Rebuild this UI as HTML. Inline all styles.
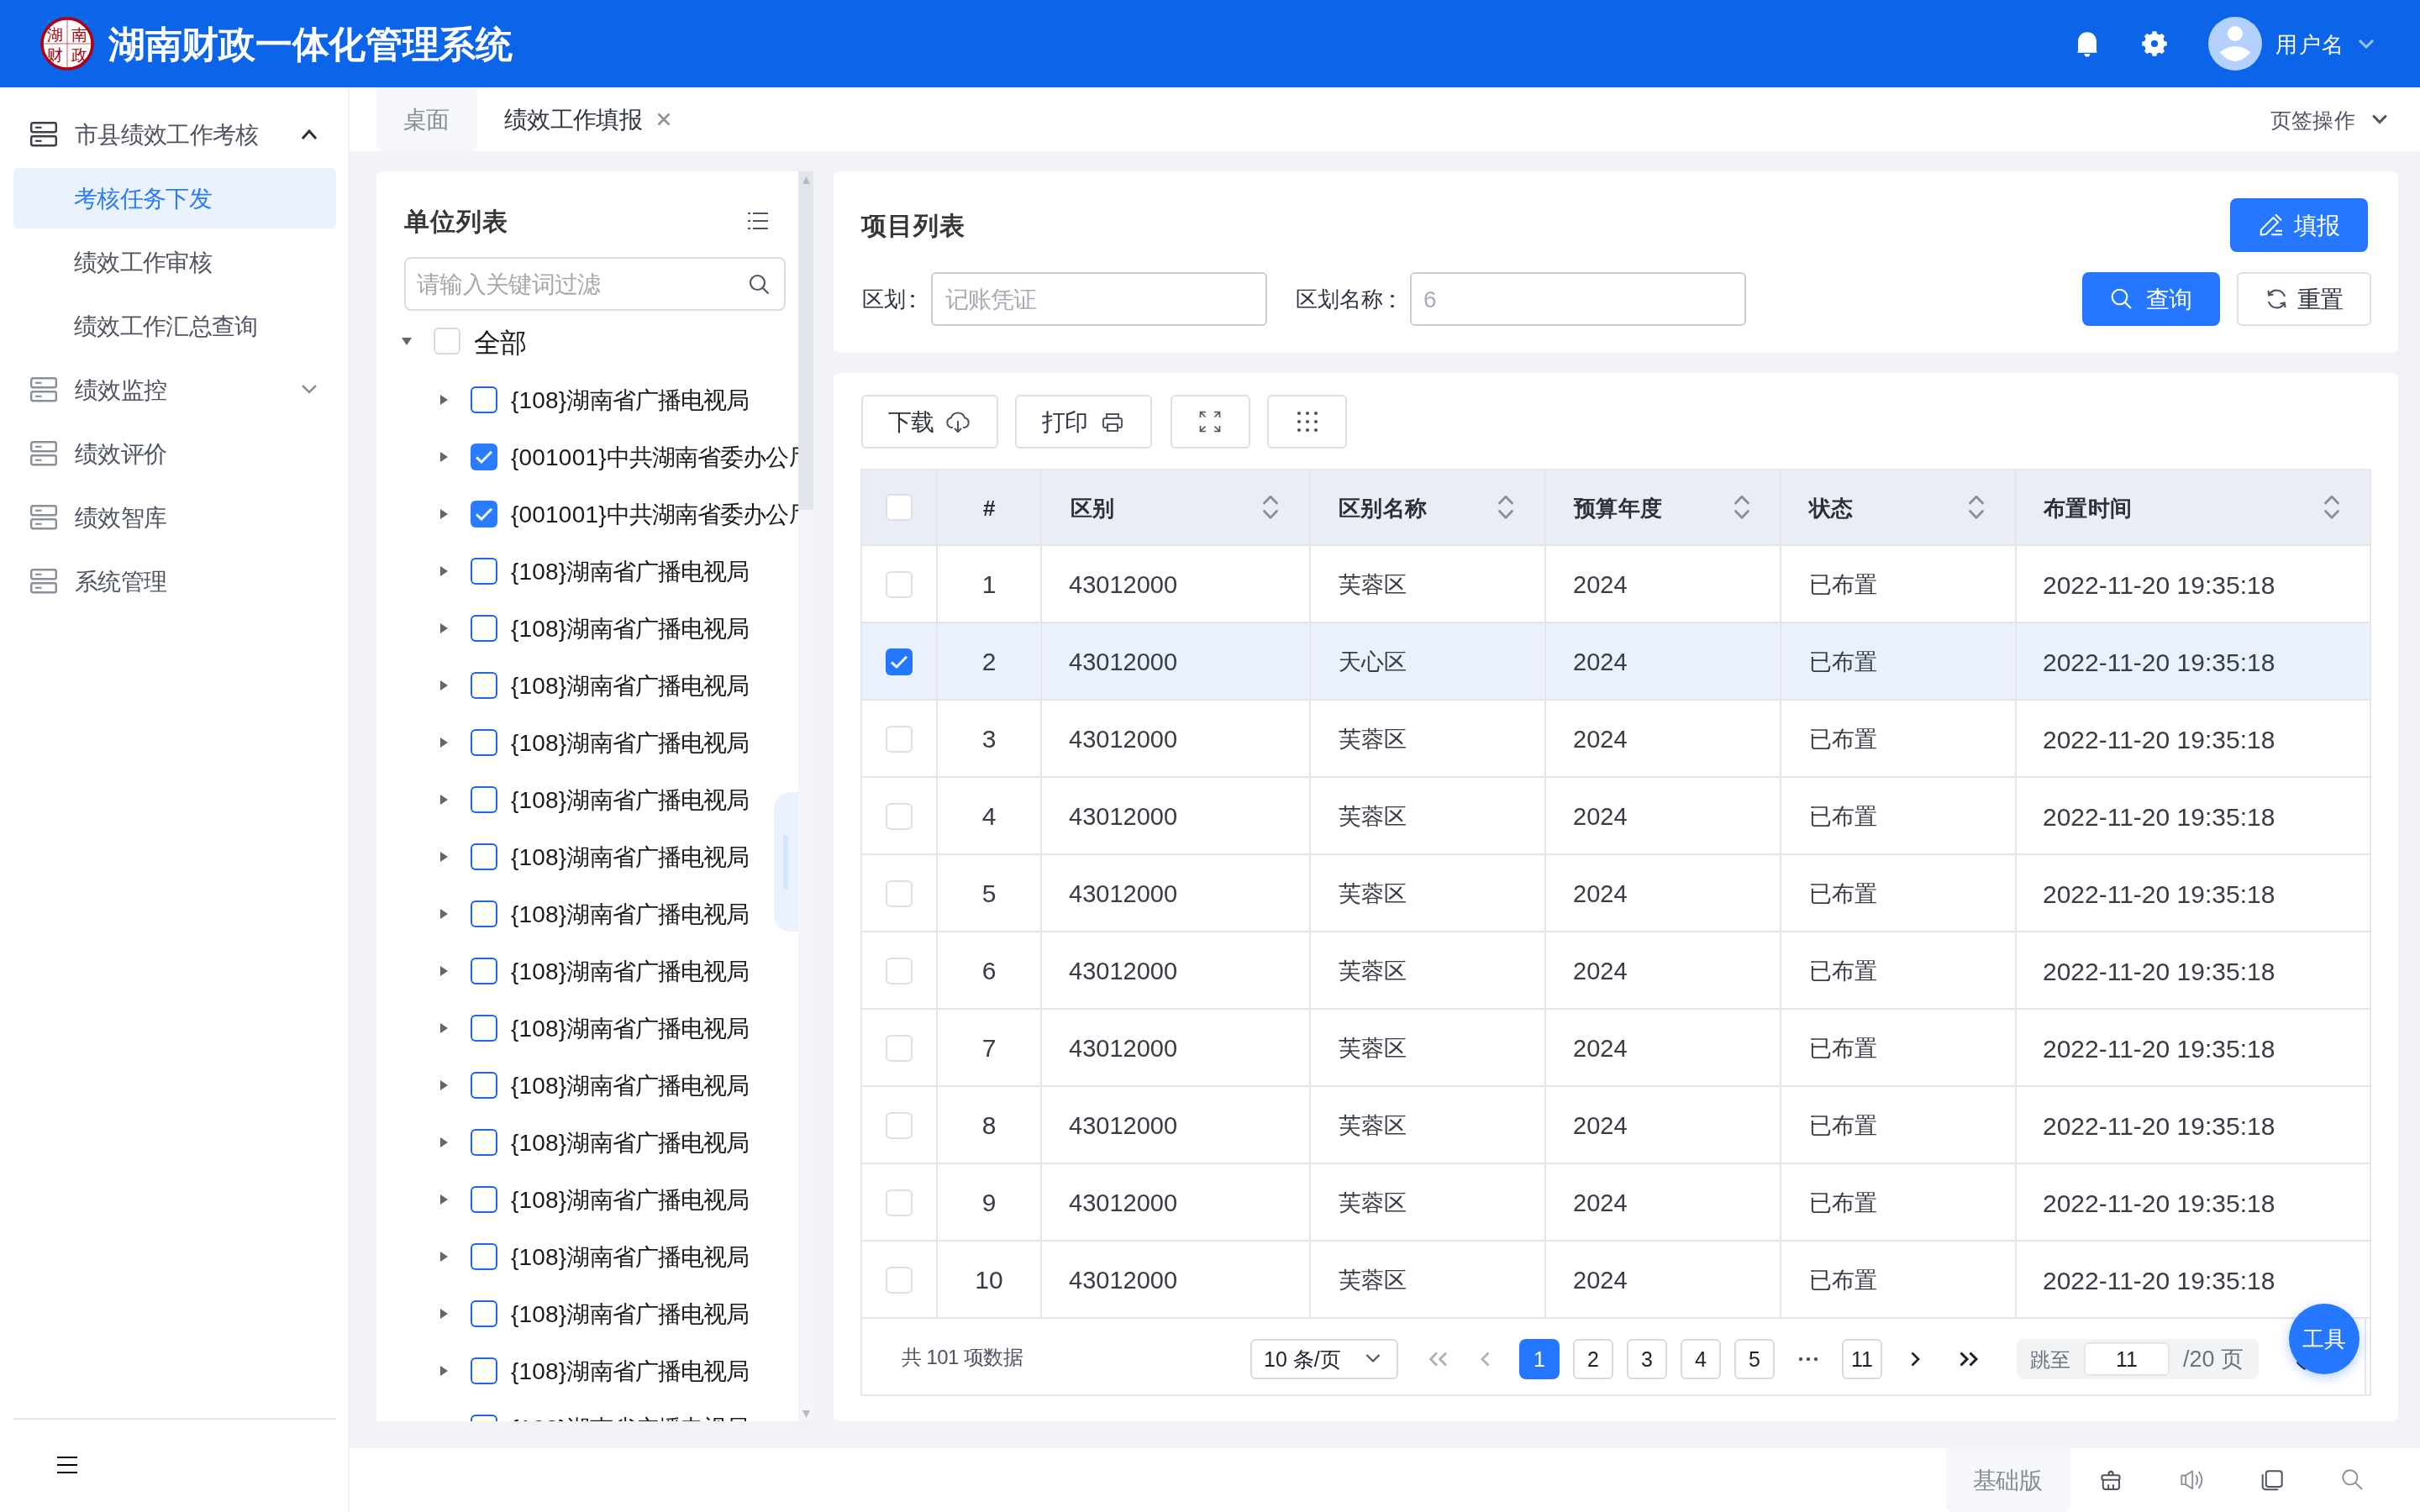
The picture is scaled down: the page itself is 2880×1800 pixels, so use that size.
<!DOCTYPE html><html><head><meta charset="utf-8"><style>
*{box-sizing:border-box;margin:0;padding:0}
html,body{width:2880px;height:1800px;overflow:hidden;background:#fff;font-family:"Liberation Sans",sans-serif;color:#1d2129}
@media (max-width:2000px){html{zoom:0.5}}
.a{position:absolute}
.t{position:absolute;white-space:nowrap;line-height:1;will-change:transform}
svg{position:absolute;overflow:visible}
.cb{position:absolute;width:32px;height:32px;border-radius:6px;background:#fff}
</style></head><body>
<div class="a" style="left:0;top:0;width:2880px;height:104px;background:#0c64e8"></div>
<svg style="left:48px;top:20px" width="64" height="64" viewBox="0 0 64 64">
<circle cx="32" cy="32" r="30" fill="#fff" stroke="#b3000f" stroke-width="3.5"/>
<line x1="32" y1="3" x2="32" y2="61" stroke="#b3000f" stroke-width="0.8" opacity="0.8"/>
<line x1="3" y1="32" x2="61" y2="32" stroke="#b3000f" stroke-width="0.8" opacity="0.8"/>
<text x="17.5" y="28" font-size="19" text-anchor="middle" fill="#a8000c" font-family="Liberation Serif" font-weight="400">湖</text>
<text x="46" y="28" font-size="19" text-anchor="middle" fill="#a8000c" font-family="Liberation Serif" font-weight="400">南</text>
<text x="17.5" y="52" font-size="19" text-anchor="middle" fill="#a8000c" font-family="Liberation Serif" font-weight="400">财</text>
<text x="46" y="52" font-size="19" text-anchor="middle" fill="#a8000c" font-family="Liberation Serif" font-weight="400">政</text>
</svg>
<div class="t" style="left:129px;top:31.3px;font-size:44px;color:#fff;font-weight:700;letter-spacing:-0.30px;">湖南财政一体化管理系统</div>
<svg style="left:2470px;top:38px" width="28" height="32" viewBox="0 0 28 32">
<path d="M3 23 L3 11.5 C3 5 7.8 0.3 14 0.3 C20.2 0.3 25 5 25 11.5 L25 23 L25.3 23 L25.3 24.8 L2.6 24.8 L2.6 23 Z" fill="#fff"/>
<path d="M10.4 25.9 L17.4 25.9 C17.2 28.2 15.8 29.6 13.9 29.6 C12 29.6 10.6 28.2 10.4 25.9 Z" fill="#fff"/>
</svg>
<svg style="left:2549px;top:37px" width="30" height="30" viewBox="0 0 30 30">
<path fill="#fff" fill-rule="evenodd" d="M12.15 3.14 L12.52 0.21 L17.48 0.21 L17.85 3.14 L21.37 4.60 L23.71 2.79 L27.21 6.29 L25.40 8.63 L26.86 12.15 L29.79 12.52 L29.79 17.48 L26.86 17.85 L25.40 21.37 L27.21 23.71 L23.71 27.21 L21.37 25.40 L17.85 26.86 L17.48 29.79 L12.52 29.79 L12.15 26.86 L8.63 25.40 L6.29 27.21 L2.79 23.71 L4.60 21.37 L3.14 17.85 L0.21 17.48 L0.21 12.52 L3.14 12.15 L4.60 8.63 L2.79 6.29 L6.29 2.79 L8.63 4.60 Z M19.1 15 A4.1 4.1 0 1 0 10.9 15 A4.1 4.1 0 1 0 19.1 15 Z"/>
</svg>
<svg style="left:2628px;top:20px" width="64" height="64" viewBox="0 0 64 64">
<circle cx="32" cy="32" r="32" fill="#b3d1fe"/>
<circle cx="32" cy="20" r="9" fill="#fff"/>
<path d="M13.8 42.2 Q32 27.6 50.2 42.2 Q32 63.8 13.8 42.2 Z" fill="#fff"/>
</svg>
<div class="t" style="left:2708px;top:39.8px;font-size:26px;color:#fff;font-weight:400;letter-spacing:1.60px;">用户名</div>
<svg style="left:2806px;top:46px" width="20" height="12" viewBox="0 0 20 12"><path d="M2 2 L10 10 L18 2" fill="none" stroke="#9fc2f7" stroke-width="3"/></svg>
<div class="a" style="left:0;top:104px;width:416px;height:1696px;background:#fff;border-right:2px solid #f2f2f3"></div>
<div class="a" style="left:16px;top:200px;width:384px;height:72px;background:#eaf2fe;border-radius:6px"></div>
<svg style="left:36px;top:145px" width="33" height="30" viewBox="0 0 33 30">
<rect x="1.2" y="1.2" width="29.6" height="11" rx="2" fill="none" stroke="#3a3f4a" stroke-width="2.4"/>
<rect x="1.2" y="17.2" width="29.6" height="11" rx="2" fill="none" stroke="#3a3f4a" stroke-width="2.4"/>
<rect x="6" y="5.7" width="7.5" height="2.2" fill="#3a3f4a"/><rect x="6" y="21.7" width="7.5" height="2.2" fill="#3a3f4a"/>
</svg>
<div class="t" style="left:89px;top:146.8px;font-size:28px;color:#4e5461;font-weight:400;letter-spacing:-0.70px;">市县绩效工作考核</div>
<svg style="left:358px;top:153px" width="20" height="14" viewBox="0 0 20 14"><path d="M2 12 L10 3 L18 12" fill="none" stroke="#2b2f36" stroke-width="3"/></svg>
<div class="t" style="left:88px;top:222.8px;font-size:28px;color:#2b7bff;font-weight:400;letter-spacing:-0.70px;">考核任务下发</div>
<div class="t" style="left:88px;top:298.8px;font-size:28px;color:#50555f;font-weight:400;letter-spacing:-0.70px;">绩效工作审核</div>
<div class="t" style="left:88px;top:374.8px;font-size:28px;color:#50555f;font-weight:400;letter-spacing:-0.70px;">绩效工作汇总查询</div>
<svg style="left:36px;top:449px" width="33" height="30" viewBox="0 0 33 30">
<rect x="1.2" y="1.2" width="29.6" height="11" rx="2" fill="none" stroke="#8a9099" stroke-width="2.4"/>
<rect x="1.2" y="17.2" width="29.6" height="11" rx="2" fill="none" stroke="#8a9099" stroke-width="2.4"/>
<rect x="6" y="5.7" width="7.5" height="2.2" fill="#8a9099"/><rect x="6" y="21.7" width="7.5" height="2.2" fill="#8a9099"/>
</svg>
<div class="t" style="left:89px;top:450.8px;font-size:28px;color:#4e5461;font-weight:400;letter-spacing:-0.70px;">绩效监控</div>
<svg style="left:36px;top:525px" width="33" height="30" viewBox="0 0 33 30">
<rect x="1.2" y="1.2" width="29.6" height="11" rx="2" fill="none" stroke="#8a9099" stroke-width="2.4"/>
<rect x="1.2" y="17.2" width="29.6" height="11" rx="2" fill="none" stroke="#8a9099" stroke-width="2.4"/>
<rect x="6" y="5.7" width="7.5" height="2.2" fill="#8a9099"/><rect x="6" y="21.7" width="7.5" height="2.2" fill="#8a9099"/>
</svg>
<div class="t" style="left:89px;top:526.8px;font-size:28px;color:#4e5461;font-weight:400;letter-spacing:-0.70px;">绩效评价</div>
<svg style="left:36px;top:601px" width="33" height="30" viewBox="0 0 33 30">
<rect x="1.2" y="1.2" width="29.6" height="11" rx="2" fill="none" stroke="#8a9099" stroke-width="2.4"/>
<rect x="1.2" y="17.2" width="29.6" height="11" rx="2" fill="none" stroke="#8a9099" stroke-width="2.4"/>
<rect x="6" y="5.7" width="7.5" height="2.2" fill="#8a9099"/><rect x="6" y="21.7" width="7.5" height="2.2" fill="#8a9099"/>
</svg>
<div class="t" style="left:89px;top:602.8px;font-size:28px;color:#4e5461;font-weight:400;letter-spacing:-0.70px;">绩效智库</div>
<svg style="left:36px;top:677px" width="33" height="30" viewBox="0 0 33 30">
<rect x="1.2" y="1.2" width="29.6" height="11" rx="2" fill="none" stroke="#8a9099" stroke-width="2.4"/>
<rect x="1.2" y="17.2" width="29.6" height="11" rx="2" fill="none" stroke="#8a9099" stroke-width="2.4"/>
<rect x="6" y="5.7" width="7.5" height="2.2" fill="#8a9099"/><rect x="6" y="21.7" width="7.5" height="2.2" fill="#8a9099"/>
</svg>
<div class="t" style="left:89px;top:678.8px;font-size:28px;color:#4e5461;font-weight:400;letter-spacing:-0.70px;">系统管理</div>
<svg style="left:358px;top:456px" width="20" height="14" viewBox="0 0 20 14"><path d="M2 3 L10 11 L18 3" fill="none" stroke="#8a9099" stroke-width="2.5"/></svg>
<div class="a" style="left:16px;top:1688px;width:384px;height:2px;background:#e6e6e8"></div>
<div class="a" style="left:68px;top:1734px;width:24px;height:2px;background:#000"></div>
<div class="a" style="left:68px;top:1743px;width:24px;height:2px;background:#000"></div>
<div class="a" style="left:68px;top:1752px;width:24px;height:2px;background:#000"></div>
<div class="a" style="left:448px;top:104px;width:120px;height:76px;background:#f5f7fa;border-radius:0 0 8px 8px"></div>
<div class="t" style="left:480px;top:128.8px;font-size:28px;color:#878d96;font-weight:400;letter-spacing:-0.70px;">桌面</div>
<div class="t" style="left:600px;top:128.8px;font-size:28px;color:#2f3540;font-weight:400;letter-spacing:-0.70px;">绩效工作填报</div>
<svg style="left:782px;top:134px" width="16" height="16" viewBox="0 0 16 16"><path d="M1.5 1.5 L14.5 14.5 M14.5 1.5 L1.5 14.5" stroke="#8b9099" stroke-width="2.5"/></svg>
<div class="t" style="left:2702px;top:130.8px;font-size:25px;color:#4e5461;font-weight:400;letter-spacing:0.20px;">页签操作</div>
<svg style="left:2822px;top:135px" width="20" height="14" viewBox="0 0 20 14"><path d="M2.2 2.5 L10 10.5 L17.8 2.5" fill="none" stroke="#4e5461" stroke-width="3"/></svg>
<div class="a" style="left:416px;top:180px;width:2464px;height:1544px;background:#f0f2f5"></div>
<div class="a" style="left:448px;top:204px;width:520px;height:1488px;background:#fff;border-radius:8px 0 0 0;overflow:hidden">
<div class="t" style="left:33px;top:44.9px;font-size:30px;color:#363636;font-weight:700;letter-spacing:1.00px;">单位列表</div>
<svg style="left:442px;top:48px" width="24" height="21" viewBox="0 0 24 21">
<g fill="#4e5461"><rect x="0" y="1" width="3" height="2"/><rect x="6" y="1" width="18" height="2"/>
<rect x="0" y="10" width="3" height="2"/><rect x="6" y="10" width="18" height="2"/>
<rect x="0" y="19" width="3" height="2"/><rect x="6" y="19" width="18" height="2"/></g></svg>
<div class="a" style="left:33px;top:102px;width:454px;height:64px;border:2px solid #dcdcdc;border-radius:8px"></div>
<div class="t" style="left:48px;top:120.8px;font-size:28px;color:#a8a8a8;font-weight:400;letter-spacing:-0.70px;">请输入关键词过滤</div>
<svg style="left:443px;top:122px" width="25" height="25" viewBox="0 0 25 25">
<circle cx="10.5" cy="10.5" r="8.5" fill="none" stroke="#4e5461" stroke-width="2.2"/>
<path d="M17 17 L23.5 23.5" stroke="#4e5461" stroke-width="2.2"/></svg>
<svg style="left:30px;top:198px" width="12" height="9" viewBox="0 0 12 9"><path d="M0 0 L12 0 L6 9 Z" fill="#666"/></svg>
<div class="cb" style="left:68px;top:186px;border:2px solid #d9d9d9"></div>
<div class="t" style="left:116px;top:188.0px;font-size:32px;color:#1a1a1a;font-weight:400;letter-spacing:-0.80px;">全部</div>
<svg style="left:76px;top:266px" width="9" height="12" viewBox="0 0 9 12"><path d="M0 0 L9 6 L0 12 Z" fill="#666"/></svg>
<div class="cb" style="left:112px;top:256px;border:2.5px solid #1a66f0"></div>
<div class="t" style="left:160px;top:258.8px;font-size:28px;color:#1a1a1a;font-weight:400;letter-spacing:-0.90px;"><span style="letter-spacing:0.2px">{108}</span>湖南省广播电视局</div>
<svg style="left:76px;top:334px" width="9" height="12" viewBox="0 0 9 12"><path d="M0 0 L9 6 L0 12 Z" fill="#666"/></svg>
<div class="cb" style="left:112px;top:324px;background:#2b7bff"></div>
<svg style="left:112px;top:324px" width="32" height="32" viewBox="0 0 32 32"><path d="M7 16.3 L13 22 L25 9.8" fill="none" stroke="#f2f6ff" stroke-width="3"/></svg>
<div class="t" style="left:160px;top:326.8px;font-size:28px;color:#1a1a1a;font-weight:400;letter-spacing:-0.90px;"><span style="letter-spacing:0.2px">{001001}</span>中共湖南省委办公厅</div>
<svg style="left:76px;top:402px" width="9" height="12" viewBox="0 0 9 12"><path d="M0 0 L9 6 L0 12 Z" fill="#666"/></svg>
<div class="cb" style="left:112px;top:392px;background:#2b7bff"></div>
<svg style="left:112px;top:392px" width="32" height="32" viewBox="0 0 32 32"><path d="M7 16.3 L13 22 L25 9.8" fill="none" stroke="#f2f6ff" stroke-width="3"/></svg>
<div class="t" style="left:160px;top:394.8px;font-size:28px;color:#1a1a1a;font-weight:400;letter-spacing:-0.90px;"><span style="letter-spacing:0.2px">{001001}</span>中共湖南省委办公厅</div>
<svg style="left:76px;top:470px" width="9" height="12" viewBox="0 0 9 12"><path d="M0 0 L9 6 L0 12 Z" fill="#666"/></svg>
<div class="cb" style="left:112px;top:460px;border:2.5px solid #1a66f0"></div>
<div class="t" style="left:160px;top:462.8px;font-size:28px;color:#1a1a1a;font-weight:400;letter-spacing:-0.90px;"><span style="letter-spacing:0.2px">{108}</span>湖南省广播电视局</div>
<svg style="left:76px;top:538px" width="9" height="12" viewBox="0 0 9 12"><path d="M0 0 L9 6 L0 12 Z" fill="#666"/></svg>
<div class="cb" style="left:112px;top:528px;border:2.5px solid #1a66f0"></div>
<div class="t" style="left:160px;top:530.8px;font-size:28px;color:#1a1a1a;font-weight:400;letter-spacing:-0.90px;"><span style="letter-spacing:0.2px">{108}</span>湖南省广播电视局</div>
<svg style="left:76px;top:606px" width="9" height="12" viewBox="0 0 9 12"><path d="M0 0 L9 6 L0 12 Z" fill="#666"/></svg>
<div class="cb" style="left:112px;top:596px;border:2.5px solid #1a66f0"></div>
<div class="t" style="left:160px;top:598.8px;font-size:28px;color:#1a1a1a;font-weight:400;letter-spacing:-0.90px;"><span style="letter-spacing:0.2px">{108}</span>湖南省广播电视局</div>
<svg style="left:76px;top:674px" width="9" height="12" viewBox="0 0 9 12"><path d="M0 0 L9 6 L0 12 Z" fill="#666"/></svg>
<div class="cb" style="left:112px;top:664px;border:2.5px solid #1a66f0"></div>
<div class="t" style="left:160px;top:666.8px;font-size:28px;color:#1a1a1a;font-weight:400;letter-spacing:-0.90px;"><span style="letter-spacing:0.2px">{108}</span>湖南省广播电视局</div>
<svg style="left:76px;top:742px" width="9" height="12" viewBox="0 0 9 12"><path d="M0 0 L9 6 L0 12 Z" fill="#666"/></svg>
<div class="cb" style="left:112px;top:732px;border:2.5px solid #1a66f0"></div>
<div class="t" style="left:160px;top:734.8px;font-size:28px;color:#1a1a1a;font-weight:400;letter-spacing:-0.90px;"><span style="letter-spacing:0.2px">{108}</span>湖南省广播电视局</div>
<svg style="left:76px;top:810px" width="9" height="12" viewBox="0 0 9 12"><path d="M0 0 L9 6 L0 12 Z" fill="#666"/></svg>
<div class="cb" style="left:112px;top:800px;border:2.5px solid #1a66f0"></div>
<div class="t" style="left:160px;top:802.8px;font-size:28px;color:#1a1a1a;font-weight:400;letter-spacing:-0.90px;"><span style="letter-spacing:0.2px">{108}</span>湖南省广播电视局</div>
<svg style="left:76px;top:878px" width="9" height="12" viewBox="0 0 9 12"><path d="M0 0 L9 6 L0 12 Z" fill="#666"/></svg>
<div class="cb" style="left:112px;top:868px;border:2.5px solid #1a66f0"></div>
<div class="t" style="left:160px;top:870.8px;font-size:28px;color:#1a1a1a;font-weight:400;letter-spacing:-0.90px;"><span style="letter-spacing:0.2px">{108}</span>湖南省广播电视局</div>
<svg style="left:76px;top:946px" width="9" height="12" viewBox="0 0 9 12"><path d="M0 0 L9 6 L0 12 Z" fill="#666"/></svg>
<div class="cb" style="left:112px;top:936px;border:2.5px solid #1a66f0"></div>
<div class="t" style="left:160px;top:938.8px;font-size:28px;color:#1a1a1a;font-weight:400;letter-spacing:-0.90px;"><span style="letter-spacing:0.2px">{108}</span>湖南省广播电视局</div>
<svg style="left:76px;top:1014px" width="9" height="12" viewBox="0 0 9 12"><path d="M0 0 L9 6 L0 12 Z" fill="#666"/></svg>
<div class="cb" style="left:112px;top:1004px;border:2.5px solid #1a66f0"></div>
<div class="t" style="left:160px;top:1006.8px;font-size:28px;color:#1a1a1a;font-weight:400;letter-spacing:-0.90px;"><span style="letter-spacing:0.2px">{108}</span>湖南省广播电视局</div>
<svg style="left:76px;top:1082px" width="9" height="12" viewBox="0 0 9 12"><path d="M0 0 L9 6 L0 12 Z" fill="#666"/></svg>
<div class="cb" style="left:112px;top:1072px;border:2.5px solid #1a66f0"></div>
<div class="t" style="left:160px;top:1074.8px;font-size:28px;color:#1a1a1a;font-weight:400;letter-spacing:-0.90px;"><span style="letter-spacing:0.2px">{108}</span>湖南省广播电视局</div>
<svg style="left:76px;top:1150px" width="9" height="12" viewBox="0 0 9 12"><path d="M0 0 L9 6 L0 12 Z" fill="#666"/></svg>
<div class="cb" style="left:112px;top:1140px;border:2.5px solid #1a66f0"></div>
<div class="t" style="left:160px;top:1142.8px;font-size:28px;color:#1a1a1a;font-weight:400;letter-spacing:-0.90px;"><span style="letter-spacing:0.2px">{108}</span>湖南省广播电视局</div>
<svg style="left:76px;top:1218px" width="9" height="12" viewBox="0 0 9 12"><path d="M0 0 L9 6 L0 12 Z" fill="#666"/></svg>
<div class="cb" style="left:112px;top:1208px;border:2.5px solid #1a66f0"></div>
<div class="t" style="left:160px;top:1210.8px;font-size:28px;color:#1a1a1a;font-weight:400;letter-spacing:-0.90px;"><span style="letter-spacing:0.2px">{108}</span>湖南省广播电视局</div>
<svg style="left:76px;top:1286px" width="9" height="12" viewBox="0 0 9 12"><path d="M0 0 L9 6 L0 12 Z" fill="#666"/></svg>
<div class="cb" style="left:112px;top:1276px;border:2.5px solid #1a66f0"></div>
<div class="t" style="left:160px;top:1278.8px;font-size:28px;color:#1a1a1a;font-weight:400;letter-spacing:-0.90px;"><span style="letter-spacing:0.2px">{108}</span>湖南省广播电视局</div>
<svg style="left:76px;top:1354px" width="9" height="12" viewBox="0 0 9 12"><path d="M0 0 L9 6 L0 12 Z" fill="#666"/></svg>
<div class="cb" style="left:112px;top:1344px;border:2.5px solid #1a66f0"></div>
<div class="t" style="left:160px;top:1346.8px;font-size:28px;color:#1a1a1a;font-weight:400;letter-spacing:-0.90px;"><span style="letter-spacing:0.2px">{108}</span>湖南省广播电视局</div>
<svg style="left:76px;top:1422px" width="9" height="12" viewBox="0 0 9 12"><path d="M0 0 L9 6 L0 12 Z" fill="#666"/></svg>
<div class="cb" style="left:112px;top:1412px;border:2.5px solid #1a66f0"></div>
<div class="t" style="left:160px;top:1414.8px;font-size:28px;color:#1a1a1a;font-weight:400;letter-spacing:-0.90px;"><span style="letter-spacing:0.2px">{108}</span>湖南省广播电视局</div>
<svg style="left:76px;top:1490px" width="9" height="12" viewBox="0 0 9 12"><path d="M0 0 L9 6 L0 12 Z" fill="#666"/></svg>
<div class="cb" style="left:112px;top:1480px;border:2.5px solid #1a66f0"></div>
<div class="t" style="left:160px;top:1482.8px;font-size:28px;color:#1a1a1a;font-weight:400;letter-spacing:-0.90px;"><span style="letter-spacing:0.2px">{108}</span>湖南省广播电视局</div>
<div class="a" style="left:473px;top:739px;width:40px;height:166px;background:#ebf2fe;border-radius:20px 0 0 20px"></div>
<div class="a" style="left:484px;top:790px;width:6px;height:65px;background:#d6e6fd;border-radius:3px"></div>
<div class="a" style="left:502px;top:0;width:18px;height:1488px;background:#f4f5f8"></div>
<div class="a" style="left:502px;top:0;width:18px;height:403px;background:#e2e5eb"></div>
<svg style="left:507px;top:6px" width="9" height="9" viewBox="0 0 9 9"><path d="M4.5 0 L9 9 L0 9 Z" fill="#b4bac5"/></svg>
<svg style="left:507px;top:1475px" width="9" height="9" viewBox="0 0 9 9"><path d="M0 0 L9 0 L4.5 9 Z" fill="#b4bac5"/></svg>
</div>
<div class="a" style="left:992px;top:204px;width:1862px;height:216px;background:#fff;border-radius:8px"></div>
<div class="t" style="left:1025px;top:254.4px;font-size:30px;color:#363636;font-weight:700;letter-spacing:1.00px;">项目列表</div>
<div class="t" style="left:1026px;top:343.1px;font-size:26px;color:#2f3540;font-weight:400;letter-spacing:0.00px;">区划</div>
<div class="a" style="left:1084.2px;top:350.7px;width:3.8px;height:3.8px;border-radius:50%;background:#2f3540"></div><div class="a" style="left:1084.2px;top:362.5px;width:3.8px;height:3.8px;border-radius:50%;background:#2f3540"></div>
<div class="a" style="left:1108px;top:324px;width:400px;height:64px;border:2px solid #c9cdd4;border-radius:6px"></div>
<div class="t" style="left:1125px;top:342.8px;font-size:28px;color:#a8abb2;font-weight:400;letter-spacing:-1.00px;">记账凭证</div>
<div class="t" style="left:1542px;top:343.1px;font-size:26px;color:#2f3540;font-weight:400;letter-spacing:0.00px;">区划名称</div>
<div class="a" style="left:1655.2px;top:350.7px;width:3.8px;height:3.8px;border-radius:50%;background:#2f3540"></div><div class="a" style="left:1655.2px;top:362.5px;width:3.8px;height:3.8px;border-radius:50%;background:#2f3540"></div>
<div class="a" style="left:1678px;top:324px;width:400px;height:64px;border:2px solid #c9cdd4;border-radius:6px"></div>
<div class="t" style="left:1694px;top:342.8px;font-size:28px;color:#a8abb2;font-weight:400;letter-spacing:0.00px;">6</div>
<div class="a" style="left:2654px;top:236px;width:164px;height:64px;background:#2677ff;border-radius:8px"></div>
<svg style="left:2688px;top:253px" width="30" height="28" viewBox="0 0 30 28">
<path d="M2.5 26.5 L3 20.5 L17.5 6 L23 11.5 L8.5 26 Z" fill="none" stroke="#fff" stroke-width="2" stroke-linejoin="round"/>
<path d="M20 2.2 L27 9.2" stroke="#fff" stroke-width="2"/>
<path d="M20 21.8 L28 21.8 M15 26.3 L28 26.3" stroke="#fff" stroke-width="2"/></svg>
<div class="t" style="left:2730px;top:254.8px;font-size:28px;color:#fff;font-weight:400;letter-spacing:-0.70px;">填报</div>
<div class="a" style="left:2478px;top:324px;width:164px;height:64px;background:#2677ff;border-radius:8px"></div>
<svg style="left:2512px;top:343px" width="26" height="26" viewBox="0 0 26 26">
<circle cx="10.5" cy="10.5" r="8.8" fill="none" stroke="#fff" stroke-width="2.1"/>
<path d="M17 17 L24 24" stroke="#fff" stroke-width="2.1"/></svg>
<div class="t" style="left:2554px;top:342.8px;font-size:28px;color:#fff;font-weight:400;letter-spacing:-0.70px;">查询</div>
<div class="a" style="left:2662px;top:324px;width:160px;height:64px;background:#fff;border:2px solid #dcdfe6;border-radius:6px"></div>
<svg style="left:2696px;top:343px" width="27" height="26" viewBox="0 0 27 26">
<path d="M23 10 A10 10 0 0 0 4.5 8" fill="none" stroke="#4e5461" stroke-width="2.1"/>
<path d="M4 16 A10 10 0 0 0 22.5 18" fill="none" stroke="#4e5461" stroke-width="2.1"/>
<path d="M3.5 3 L4.2 8.5 L9.5 7.5" fill="none" stroke="#4e5461" stroke-width="2.1"/>
<path d="M23.5 23 L22.8 17.5 L17.5 18.5" fill="none" stroke="#4e5461" stroke-width="2.1"/></svg>
<div class="t" style="left:2734px;top:342.8px;font-size:28px;color:#2f3540;font-weight:400;letter-spacing:-0.70px;">重置</div>
<div class="a" style="left:992px;top:444px;width:1862px;height:1248px;background:#fff;border-radius:8px"></div>
<div class="a" style="left:1025px;top:470px;width:163px;height:64px;background:#fff;border:2px solid #dcdfe6;border-radius:6px"></div>
<div class="a" style="left:1208px;top:470px;width:163px;height:64px;background:#fff;border:2px solid #dcdfe6;border-radius:6px"></div>
<div class="a" style="left:1393px;top:470px;width:95px;height:64px;background:#fff;border:2px solid #dcdfe6;border-radius:6px"></div>
<div class="a" style="left:1508px;top:470px;width:95px;height:64px;background:#fff;border:2px solid #dcdfe6;border-radius:6px"></div>
<div class="t" style="left:1057px;top:488.8px;font-size:28px;color:#2f3540;font-weight:400;letter-spacing:-0.70px;">下载</div>
<svg style="left:1125px;top:489.5px" width="30" height="26" viewBox="0 0 30 26">
<path d="M9 19 L7.5 19 A6 6 0 0 1 7 7.2 A8.5 8.5 0 0 1 23 7.2 A6 6 0 0 1 22.5 19 L21 19" fill="none" stroke="#4e5461" stroke-width="2"/>
<path d="M15 11 L15 24 M11 20 L15 24 L19 20" fill="none" stroke="#4e5461" stroke-width="2"/></svg>
<div class="t" style="left:1240px;top:488.8px;font-size:28px;color:#2f3540;font-weight:400;letter-spacing:-0.70px;">打印</div>
<svg style="left:1311px;top:491px" width="26" height="24" viewBox="0 0 26 24">
<path d="M6 7 L6 2 L20 2 L20 7" fill="none" stroke="#4e5461" stroke-width="2"/>
<rect x="2" y="7" width="22" height="11" rx="2" fill="none" stroke="#4e5461" stroke-width="2"/>
<rect x="7" y="14" width="12" height="8" fill="#fff" stroke="#4e5461" stroke-width="2"/></svg>
<svg style="left:1427px;top:489px" width="26" height="26" viewBox="0 0 26 26">
<g fill="none" stroke="#4e5461" stroke-width="1.7">
<path d="M1.5 8 L1.5 1.5 L8 1.5 M1.5 1.5 L7.5 7.5"/><path d="M18 1.5 L24.5 1.5 L24.5 8 M24.5 1.5 L18.5 7.5"/>
<path d="M1.5 18 L1.5 24.5 L8 24.5 M1.5 24.5 L7.5 18.5"/><path d="M18 24.5 L24.5 24.5 L24.5 18 M24.5 24.5 L18.5 18.5"/></g></svg>
<svg style="left:1543px;top:489px" width="26" height="26" viewBox="0 0 26 26"><circle cx="3" cy="3" r="2.1" fill="#4e5461"/><circle cx="3" cy="13" r="2.1" fill="#4e5461"/><circle cx="3" cy="23" r="2.1" fill="#4e5461"/><circle cx="13" cy="3" r="2.1" fill="#4e5461"/><circle cx="13" cy="13" r="2.1" fill="#4e5461"/><circle cx="13" cy="23" r="2.1" fill="#4e5461"/><circle cx="23" cy="3" r="2.1" fill="#4e5461"/><circle cx="23" cy="13" r="2.1" fill="#4e5461"/><circle cx="23" cy="23" r="2.1" fill="#4e5461"/></svg>
<div class="a" style="left:1024px;top:558px;width:1798px;height:1104px;border:2px solid #e4e7ed"></div>
<div class="a" style="left:1026px;top:560px;width:1794px;height:88px;background:#e9edf5"></div>
<div class="a" style="left:1026px;top:742px;width:1794px;height:90px;background:#eaf1fd"></div>
<div class="a" style="left:1024px;top:648px;width:1798px;height:2px;background:#e5e5e5"></div>
<div class="a" style="left:1024px;top:740px;width:1798px;height:2px;background:#e5e5e5"></div>
<div class="a" style="left:1024px;top:832px;width:1798px;height:2px;background:#e5e5e5"></div>
<div class="a" style="left:1024px;top:924px;width:1798px;height:2px;background:#e5e5e5"></div>
<div class="a" style="left:1024px;top:1016px;width:1798px;height:2px;background:#e5e5e5"></div>
<div class="a" style="left:1024px;top:1108px;width:1798px;height:2px;background:#e5e5e5"></div>
<div class="a" style="left:1024px;top:1200px;width:1798px;height:2px;background:#e5e5e5"></div>
<div class="a" style="left:1024px;top:1292px;width:1798px;height:2px;background:#e5e5e5"></div>
<div class="a" style="left:1024px;top:1384px;width:1798px;height:2px;background:#e5e5e5"></div>
<div class="a" style="left:1024px;top:1476px;width:1798px;height:2px;background:#e5e5e5"></div>
<div class="a" style="left:1024px;top:1568px;width:1798px;height:2px;background:#e5e5e5"></div>
<div class="a" style="left:1114px;top:558px;width:2px;height:1012px;background:#e5e5e5"></div>
<div class="a" style="left:1238px;top:558px;width:2px;height:1012px;background:#e5e5e5"></div>
<div class="a" style="left:1558px;top:558px;width:2px;height:1012px;background:#e5e5e5"></div>
<div class="a" style="left:1838px;top:558px;width:2px;height:1012px;background:#e5e5e5"></div>
<div class="a" style="left:2118px;top:558px;width:2px;height:1012px;background:#e5e5e5"></div>
<div class="a" style="left:2398px;top:558px;width:2px;height:1012px;background:#e5e5e5"></div>
<div class="cb" style="left:1054px;top:588px;border:2px solid #dcdfe6"></div>
<div class="t" style="left:1170px;top:591.8px;font-size:26px;color:#2b2f36;font-weight:700;letter-spacing:-0.65px;">#</div>
<div class="t" style="left:1274px;top:591.8px;font-size:26px;color:#2b2f36;font-weight:700;letter-spacing:0.30px;">区别</div>
<svg style="left:1502px;top:590px" width="19" height="28" viewBox="0 0 19 28"><path d="M2.5 9 L10 1.2 L17.5 9 M2.5 18.5 L10 26.3 L17.5 18.5" fill="none" stroke="#8a8e96" stroke-width="2.8" stroke-linecap="round" stroke-linejoin="round"/></svg>
<div class="t" style="left:1593px;top:591.8px;font-size:26px;color:#2b2f36;font-weight:700;letter-spacing:0.30px;">区别名称</div>
<svg style="left:1782px;top:590px" width="19" height="28" viewBox="0 0 19 28"><path d="M2.5 9 L10 1.2 L17.5 9 M2.5 18.5 L10 26.3 L17.5 18.5" fill="none" stroke="#8a8e96" stroke-width="2.8" stroke-linecap="round" stroke-linejoin="round"/></svg>
<div class="t" style="left:1873px;top:591.8px;font-size:26px;color:#2b2f36;font-weight:700;letter-spacing:0.30px;">预算年度</div>
<svg style="left:2063px;top:590px" width="19" height="28" viewBox="0 0 19 28"><path d="M2.5 9 L10 1.2 L17.5 9 M2.5 18.5 L10 26.3 L17.5 18.5" fill="none" stroke="#8a8e96" stroke-width="2.8" stroke-linecap="round" stroke-linejoin="round"/></svg>
<div class="t" style="left:2153px;top:591.8px;font-size:26px;color:#2b2f36;font-weight:700;letter-spacing:0.30px;">状态</div>
<svg style="left:2342px;top:590px" width="19" height="28" viewBox="0 0 19 28"><path d="M2.5 9 L10 1.2 L17.5 9 M2.5 18.5 L10 26.3 L17.5 18.5" fill="none" stroke="#8a8e96" stroke-width="2.8" stroke-linecap="round" stroke-linejoin="round"/></svg>
<div class="t" style="left:2432px;top:591.8px;font-size:26px;color:#2b2f36;font-weight:700;letter-spacing:0.30px;">布置时间</div>
<svg style="left:2765px;top:590px" width="19" height="28" viewBox="0 0 19 28"><path d="M2.5 9 L10 1.2 L17.5 9 M2.5 18.5 L10 26.3 L17.5 18.5" fill="none" stroke="#8a8e96" stroke-width="2.8" stroke-linecap="round" stroke-linejoin="round"/></svg>
<div class="cb" style="left:1054px;top:680px;border:2px solid #dcdfe6"></div>
<div class="t" style="left:1116px;width:122px;text-align:center;top:681.0px;font-size:30px;color:#383c44">1</div>
<div class="t" style="left:1272px;top:682.4px;font-size:29px;color:#383c44;font-weight:400;letter-spacing:0.00px;">43012000</div>
<div class="t" style="left:1593px;top:682.8px;font-size:27px;color:#383c44;font-weight:400;letter-spacing:0.00px;">芙蓉区</div>
<div class="t" style="left:1872px;top:682.4px;font-size:29px;color:#383c44;font-weight:400;letter-spacing:0.00px;">2024</div>
<div class="t" style="left:2153px;top:682.8px;font-size:27px;color:#383c44;font-weight:400;letter-spacing:0.00px;">已布置</div>
<div class="t" style="left:2431px;top:681.9px;font-size:30px;color:#383c44;font-weight:400;letter-spacing:0.00px;">2022-11-20 19:35:18</div>
<div class="cb" style="left:1054px;top:772px;background:#2478ff"></div>
<svg style="left:1054px;top:772px" width="32" height="32" viewBox="0 0 32 32"><path d="M7 16.3 L13 22 L25 9.8" fill="none" stroke="#f2f6ff" stroke-width="3"/></svg>
<div class="t" style="left:1116px;width:122px;text-align:center;top:773.0px;font-size:30px;color:#383c44">2</div>
<div class="t" style="left:1272px;top:774.4px;font-size:29px;color:#383c44;font-weight:400;letter-spacing:0.00px;">43012000</div>
<div class="t" style="left:1593px;top:774.8px;font-size:27px;color:#383c44;font-weight:400;letter-spacing:0.00px;">天心区</div>
<div class="t" style="left:1872px;top:774.4px;font-size:29px;color:#383c44;font-weight:400;letter-spacing:0.00px;">2024</div>
<div class="t" style="left:2153px;top:774.8px;font-size:27px;color:#383c44;font-weight:400;letter-spacing:0.00px;">已布置</div>
<div class="t" style="left:2431px;top:773.9px;font-size:30px;color:#383c44;font-weight:400;letter-spacing:0.00px;">2022-11-20 19:35:18</div>
<div class="cb" style="left:1054px;top:864px;border:2px solid #dcdfe6"></div>
<div class="t" style="left:1116px;width:122px;text-align:center;top:865.0px;font-size:30px;color:#383c44">3</div>
<div class="t" style="left:1272px;top:866.4px;font-size:29px;color:#383c44;font-weight:400;letter-spacing:0.00px;">43012000</div>
<div class="t" style="left:1593px;top:866.8px;font-size:27px;color:#383c44;font-weight:400;letter-spacing:0.00px;">芙蓉区</div>
<div class="t" style="left:1872px;top:866.4px;font-size:29px;color:#383c44;font-weight:400;letter-spacing:0.00px;">2024</div>
<div class="t" style="left:2153px;top:866.8px;font-size:27px;color:#383c44;font-weight:400;letter-spacing:0.00px;">已布置</div>
<div class="t" style="left:2431px;top:865.9px;font-size:30px;color:#383c44;font-weight:400;letter-spacing:0.00px;">2022-11-20 19:35:18</div>
<div class="cb" style="left:1054px;top:956px;border:2px solid #dcdfe6"></div>
<div class="t" style="left:1116px;width:122px;text-align:center;top:957.0px;font-size:30px;color:#383c44">4</div>
<div class="t" style="left:1272px;top:958.4px;font-size:29px;color:#383c44;font-weight:400;letter-spacing:0.00px;">43012000</div>
<div class="t" style="left:1593px;top:958.8px;font-size:27px;color:#383c44;font-weight:400;letter-spacing:0.00px;">芙蓉区</div>
<div class="t" style="left:1872px;top:958.4px;font-size:29px;color:#383c44;font-weight:400;letter-spacing:0.00px;">2024</div>
<div class="t" style="left:2153px;top:958.8px;font-size:27px;color:#383c44;font-weight:400;letter-spacing:0.00px;">已布置</div>
<div class="t" style="left:2431px;top:957.9px;font-size:30px;color:#383c44;font-weight:400;letter-spacing:0.00px;">2022-11-20 19:35:18</div>
<div class="cb" style="left:1054px;top:1048px;border:2px solid #dcdfe6"></div>
<div class="t" style="left:1116px;width:122px;text-align:center;top:1049.0px;font-size:30px;color:#383c44">5</div>
<div class="t" style="left:1272px;top:1050.4px;font-size:29px;color:#383c44;font-weight:400;letter-spacing:0.00px;">43012000</div>
<div class="t" style="left:1593px;top:1050.8px;font-size:27px;color:#383c44;font-weight:400;letter-spacing:0.00px;">芙蓉区</div>
<div class="t" style="left:1872px;top:1050.4px;font-size:29px;color:#383c44;font-weight:400;letter-spacing:0.00px;">2024</div>
<div class="t" style="left:2153px;top:1050.8px;font-size:27px;color:#383c44;font-weight:400;letter-spacing:0.00px;">已布置</div>
<div class="t" style="left:2431px;top:1049.9px;font-size:30px;color:#383c44;font-weight:400;letter-spacing:0.00px;">2022-11-20 19:35:18</div>
<div class="cb" style="left:1054px;top:1140px;border:2px solid #dcdfe6"></div>
<div class="t" style="left:1116px;width:122px;text-align:center;top:1141.0px;font-size:30px;color:#383c44">6</div>
<div class="t" style="left:1272px;top:1142.4px;font-size:29px;color:#383c44;font-weight:400;letter-spacing:0.00px;">43012000</div>
<div class="t" style="left:1593px;top:1142.8px;font-size:27px;color:#383c44;font-weight:400;letter-spacing:0.00px;">芙蓉区</div>
<div class="t" style="left:1872px;top:1142.4px;font-size:29px;color:#383c44;font-weight:400;letter-spacing:0.00px;">2024</div>
<div class="t" style="left:2153px;top:1142.8px;font-size:27px;color:#383c44;font-weight:400;letter-spacing:0.00px;">已布置</div>
<div class="t" style="left:2431px;top:1141.9px;font-size:30px;color:#383c44;font-weight:400;letter-spacing:0.00px;">2022-11-20 19:35:18</div>
<div class="cb" style="left:1054px;top:1232px;border:2px solid #dcdfe6"></div>
<div class="t" style="left:1116px;width:122px;text-align:center;top:1233.0px;font-size:30px;color:#383c44">7</div>
<div class="t" style="left:1272px;top:1234.4px;font-size:29px;color:#383c44;font-weight:400;letter-spacing:0.00px;">43012000</div>
<div class="t" style="left:1593px;top:1234.8px;font-size:27px;color:#383c44;font-weight:400;letter-spacing:0.00px;">芙蓉区</div>
<div class="t" style="left:1872px;top:1234.4px;font-size:29px;color:#383c44;font-weight:400;letter-spacing:0.00px;">2024</div>
<div class="t" style="left:2153px;top:1234.8px;font-size:27px;color:#383c44;font-weight:400;letter-spacing:0.00px;">已布置</div>
<div class="t" style="left:2431px;top:1233.9px;font-size:30px;color:#383c44;font-weight:400;letter-spacing:0.00px;">2022-11-20 19:35:18</div>
<div class="cb" style="left:1054px;top:1324px;border:2px solid #dcdfe6"></div>
<div class="t" style="left:1116px;width:122px;text-align:center;top:1325.0px;font-size:30px;color:#383c44">8</div>
<div class="t" style="left:1272px;top:1326.4px;font-size:29px;color:#383c44;font-weight:400;letter-spacing:0.00px;">43012000</div>
<div class="t" style="left:1593px;top:1326.8px;font-size:27px;color:#383c44;font-weight:400;letter-spacing:0.00px;">芙蓉区</div>
<div class="t" style="left:1872px;top:1326.4px;font-size:29px;color:#383c44;font-weight:400;letter-spacing:0.00px;">2024</div>
<div class="t" style="left:2153px;top:1326.8px;font-size:27px;color:#383c44;font-weight:400;letter-spacing:0.00px;">已布置</div>
<div class="t" style="left:2431px;top:1325.9px;font-size:30px;color:#383c44;font-weight:400;letter-spacing:0.00px;">2022-11-20 19:35:18</div>
<div class="cb" style="left:1054px;top:1416px;border:2px solid #dcdfe6"></div>
<div class="t" style="left:1116px;width:122px;text-align:center;top:1417.0px;font-size:30px;color:#383c44">9</div>
<div class="t" style="left:1272px;top:1418.4px;font-size:29px;color:#383c44;font-weight:400;letter-spacing:0.00px;">43012000</div>
<div class="t" style="left:1593px;top:1418.8px;font-size:27px;color:#383c44;font-weight:400;letter-spacing:0.00px;">芙蓉区</div>
<div class="t" style="left:1872px;top:1418.4px;font-size:29px;color:#383c44;font-weight:400;letter-spacing:0.00px;">2024</div>
<div class="t" style="left:2153px;top:1418.8px;font-size:27px;color:#383c44;font-weight:400;letter-spacing:0.00px;">已布置</div>
<div class="t" style="left:2431px;top:1417.9px;font-size:30px;color:#383c44;font-weight:400;letter-spacing:0.00px;">2022-11-20 19:35:18</div>
<div class="cb" style="left:1054px;top:1508px;border:2px solid #dcdfe6"></div>
<div class="t" style="left:1116px;width:122px;text-align:center;top:1509.0px;font-size:30px;color:#383c44">10</div>
<div class="t" style="left:1272px;top:1510.4px;font-size:29px;color:#383c44;font-weight:400;letter-spacing:0.00px;">43012000</div>
<div class="t" style="left:1593px;top:1510.8px;font-size:27px;color:#383c44;font-weight:400;letter-spacing:0.00px;">芙蓉区</div>
<div class="t" style="left:1872px;top:1510.4px;font-size:29px;color:#383c44;font-weight:400;letter-spacing:0.00px;">2024</div>
<div class="t" style="left:2153px;top:1510.8px;font-size:27px;color:#383c44;font-weight:400;letter-spacing:0.00px;">已布置</div>
<div class="t" style="left:2431px;top:1509.9px;font-size:30px;color:#383c44;font-weight:400;letter-spacing:0.00px;">2022-11-20 19:35:18</div>
<div class="t" style="left:1073px;top:1603.7px;font-size:24px;color:#4e5461;font-weight:400;letter-spacing:-0.60px;">共 101 项数据</div>
<div class="a" style="left:1488px;top:1594px;width:176px;height:48px;border:2px solid #dadada;border-radius:6px"></div>
<div class="t" style="left:1504px;top:1606.2px;font-size:25px;color:#1d2129;font-weight:400;letter-spacing:0.00px;">10 条/页</div>
<svg style="left:1625px;top:1611px" width="18" height="12" viewBox="0 0 18 12"><path d="M1.5 2 L9 9.5 L16.5 2" fill="none" stroke="#4e5461" stroke-width="2.2"/></svg>
<svg style="left:1700px;top:1609px" width="24" height="18" viewBox="0 0 24 18"><path d="M10 1.5 L2.5 9 L10 16.5 M21 1.5 L13.5 9 L21 16.5" fill="none" stroke="#a9aeb8" stroke-width="2.6"/></svg>
<svg style="left:1761px;top:1609px" width="13" height="18" viewBox="0 0 13 18"><path d="M10.5 1.5 L3 9 L10.5 16.5" fill="none" stroke="#a9aeb8" stroke-width="2.6"/></svg>
<div class="a" style="left:1808px;top:1594px;width:48px;height:48px;background:#2677ff;border-radius:8px"></div>
<div class="t" style="left:1808px;width:48px;text-align:center;top:1606.0px;font-size:25px;color:#fff">1</div>
<div class="a" style="left:1872px;top:1594px;width:48px;height:48px;border:2px solid #dadada;border-radius:6px"></div>
<div class="t" style="left:1872px;width:48px;text-align:center;top:1606.0px;font-size:25px;color:#1d2129">2</div>
<div class="a" style="left:1936px;top:1594px;width:48px;height:48px;border:2px solid #dadada;border-radius:6px"></div>
<div class="t" style="left:1936px;width:48px;text-align:center;top:1606.0px;font-size:25px;color:#1d2129">3</div>
<div class="a" style="left:2000px;top:1594px;width:48px;height:48px;border:2px solid #dadada;border-radius:6px"></div>
<div class="t" style="left:2000px;width:48px;text-align:center;top:1606.0px;font-size:25px;color:#1d2129">4</div>
<div class="a" style="left:2064px;top:1594px;width:48px;height:48px;border:2px solid #dadada;border-radius:6px"></div>
<div class="t" style="left:2064px;width:48px;text-align:center;top:1606.0px;font-size:25px;color:#1d2129">5</div>
<div class="a" style="left:2192px;top:1594px;width:48px;height:48px;border:2px solid #dadada;border-radius:6px"></div>
<div class="t" style="left:2192px;width:48px;text-align:center;top:1606.0px;font-size:25px;color:#1d2129">11</div>
<svg style="left:2140px;top:1615px" width="24" height="6" viewBox="0 0 24 6"><circle cx="3" cy="3" r="2.2" fill="#4e5461"/><circle cx="12" cy="3" r="2.2" fill="#4e5461"/><circle cx="21" cy="3" r="2.2" fill="#4e5461"/></svg>
<svg style="left:2273px;top:1609px" width="13" height="18" viewBox="0 0 13 18"><path d="M2.5 1.5 L10 9 L2.5 16.5" fill="none" stroke="#1d2129" stroke-width="2.6"/></svg>
<svg style="left:2331px;top:1609px" width="26" height="18" viewBox="0 0 26 18"><path d="M2.5 1.5 L10 9 L2.5 16.5 M13.5 1.5 L21 9 L13.5 16.5" fill="none" stroke="#1d2129" stroke-width="3"/></svg>
<div class="a" style="left:2400px;top:1594px;width:288px;height:48px;background:#f2f3f5;border-radius:8px"></div>
<div class="t" style="left:2416px;top:1606.7px;font-size:24px;color:#6b7280;font-weight:400;letter-spacing:0.00px;">跳至</div>
<div class="a" style="left:2480px;top:1598px;width:102px;height:40px;background:#fff;border:2px solid #e5e6eb;border-radius:6px"></div>
<div class="t" style="left:2480px;width:102px;text-align:center;top:1606.0px;font-size:25px;color:#1d2129">11</div>
<div class="t" style="left:2598px;top:1605.3px;font-size:27px;color:#6b7280;font-weight:400;letter-spacing:0.00px;">/20 页</div>
<div class="a" style="left:2814px;top:1570px;width:2px;height:92px;background:#e4e7ed"></div>
<svg style="left:2700px;top:1540px" width="100" height="100" viewBox="0 0 100 100"><path d="M42.5 88.8 A42 42 0 0 1 34.8 82.1" fill="none" stroke="#1a1a1a" stroke-width="3.5" stroke-linecap="round"/></svg>
<div class="a" style="left:2724px;top:1552px;width:84px;height:84px;background:#2677ff;border-radius:50%;box-shadow:0 4px 14px rgba(38,119,255,0.35)"></div>
<div class="t" style="left:2740px;top:1581.3px;font-size:26px;color:#fff;font-weight:400;letter-spacing:0.00px;">工具</div>
<div class="a" style="left:416px;top:1724px;width:2464px;height:76px;background:#fff"></div>
<div class="a" style="left:2316px;top:1724px;width:148px;height:76px;background:#f5f7fa;border-radius:0 0 8px 8px"></div>
<div class="t" style="left:2348px;top:1748.8px;font-size:28px;color:#878d96;font-weight:400;letter-spacing:-0.70px;">基础版</div>
<svg style="left:2480px;top:1735px" width="350" height="55" viewBox="0 0 350 55">
<g fill="none" stroke-linecap="round" stroke-linejoin="round">
<path d="M29.6 21 L29.6 19.5 A2.55 2.55 0 0 1 34.7 19.5 L34.7 21" stroke="#4e5461" stroke-width="2.2"/>
<rect x="21.4" y="21.2" width="21.2" height="5.6" rx="2" stroke="#4e5461" stroke-width="2"/>
<path d="M22.8 27 L22.8 35 A3 3 0 0 0 25.8 38 L39 38 A3 3 0 0 0 42 35 L42 27" stroke="#4e5461" stroke-width="2"/>
<path d="M29.2 33 L29.2 37.5 M35 33 L35 37.5" stroke="#4e5461" stroke-width="2"/>
<path d="M116.3 21.5 L121.2 21.5 L129.2 16.3 L129.2 37.3 L121.2 32.1 L116.3 32.1 Z M121.2 21.5 L121.2 32.1" stroke="#8a9099" stroke-width="1.9"/>
<path d="M133.5 21.5 C135.8 24.5 135.8 29 133.5 32" stroke="#8a9099" stroke-width="1.9"/>
<path d="M137 17.5 C141.5 23 141.5 30.5 137 36.2" stroke="#8a9099" stroke-width="1.9"/>
<rect x="216.8" y="16.2" width="18.9" height="18.8" rx="3" stroke="#4e5461" stroke-width="2"/>
<path d="M212.7 21 L212.7 34.5 A3.5 3.5 0 0 0 216.2 38.2 L230.5 38.2" stroke="#4e5461" stroke-width="2"/>
<circle cx="316.8" cy="23.8" r="8.6" stroke="#8a9099" stroke-width="1.9"/>
<path d="M323.2 30.2 L330.5 37.5" stroke="#8a9099" stroke-width="1.9"/>
</g></svg>
</body></html>
